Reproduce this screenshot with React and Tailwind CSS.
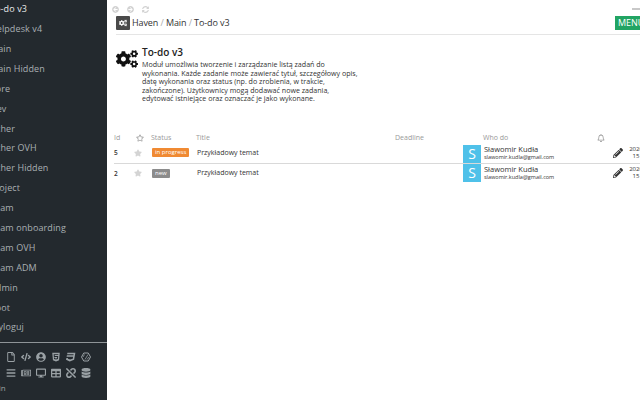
import React from "react";
import { FaCogs, FaStar, FaRegStar, FaRegBell, FaPencilAlt, FaArrowCircleLeft, FaArrowCircleRight, FaSyncAlt, FaRegFile, FaCode, FaUserCircle, FaHtml5, FaCss3, FaBars, FaDesktop, FaTable, FaUnlink, FaDatabase, FaRegNewspaper } from "react-icons/fa";

const menu = ["To-do v3","Helpdesk v4","Main","Main Hidden","Core","Dev","Other","Other OVH","Other Hidden","Project","Team","Team onboarding","Team OVH","Team ADM","Admin","Root","Wyloguj"];

const rows = [
  { id: "5", status: "in progress", cls: "bg-[#f08a33]" },
  { id: "2", status: "new", cls: "bg-[#8c8c8c]" },
];

function Hex({ className }) {
  return (
    <svg viewBox="0 0 20 20" width="1em" height="1em" className={className} fill="none" stroke="currentColor" strokeWidth="2">
      <path d="M5.5 2h9l4.5 8-4.5 8h-9L1 10z" />
      <path d="M4 10l3-5M8 15l6-10M12 15l4-5" strokeWidth="1.5" />
    </svg>
  );
}

const iconsA = [FaRegFile, FaCode, FaUserCircle, FaHtml5, FaCss3, Hex];
const iconsB = [FaBars, FaRegNewspaper, FaDesktop, FaTable, FaUnlink, FaDatabase];

function IconRow({ icons }) {
  return (
    <div className="flex items-center h-[16px] pl-[3px]">
      {icons.map((I, i) => (
        <div key={i} className="w-[15px] flex justify-center"><I className="text-[10px]" /></div>
      ))}
    </div>
  );
}

function Row({ r, first }) {
  return (
    <div className={`flex items-center w-[560px] ${first ? "h-[21px] border-b border-[#d9d9d9]" : "h-[19px]"}`}>
      <div className="w-[20px] text-[6.5px] font-semibold text-[#333]">{r.id}</div>
      <div className="w-[18px]"><FaStar className="text-[#d4d4d4] text-[8px]" /></div>
      <div className="w-[45px] flex">
        <span className={`${r.cls} text-white text-[6px] leading-[9px] px-[3px] rounded-[1px]`}>{r.status}</span>
      </div>
      <div className="w-[266px] text-[7px] text-[#333]">Przykładowy temat</div>
      <div className={`w-[18px] h-[18px] bg-[#4fc1e9] text-white flex items-center justify-center text-[14px] leading-none ${first ? "self-end" : "self-start"}`}>S</div>
      <div className="w-[129px] ml-[3px] flex flex-col">
        <span className="text-[7.5px] leading-[9px] text-[#333]">Sławomir Kudła</span>
        <span className="text-[5.5px] leading-[7px] text-[#333]">slawomir.kudla@gmail.com</span>
      </div>
      <FaPencilAlt className="text-[#333] text-[10px] shrink-0" />
      <div className="ml-[6px] text-[6px] leading-[7px] text-[#333] text-center shrink-0 w-[14px]">2020<br/>15</div>
    </div>
  );
}

export default function App() {
  return (
    <div className="flex w-[640px] h-[400px] overflow-hidden bg-white font-['Open_Sans','Noto_Sans',sans-serif]">
      <aside className="w-[107px] shrink-0 h-full bg-[#23292e] flex flex-col overflow-hidden">
        <div className="flex flex-col -ml-[10px] mt-[-1px]">
          {menu.map((m, i) => (
            <div key={m} className={`h-[19.9px] flex items-center text-[9px] tracking-[0.1px] whitespace-nowrap ${i === 0 ? "text-[#e8eaeb]" : "text-[#a9afb3]"}`}>{m}</div>
          ))}
        </div>
        <div className="mt-[5px] border-t border-[#8e9497] pt-[6px] flex flex-col text-[#9aa1a5]">
          <IconRow icons={iconsA} />
          <IconRow icons={iconsB} />
          <div className="-ml-[13px] text-[8px] mt-[1px]">Main</div>
        </div>
      </aside>
      <main className="flex-1 min-w-0 overflow-hidden">
        <div className="flex items-center gap-[8px] pl-[5px] pt-[4px] h-[14px] text-[#d2d2d2] text-[7px]">
          <FaArrowCircleLeft /><FaArrowCircleRight /><FaSyncAlt />
          <div className="ml-auto w-[8px] h-[2px] bg-[#c8c8c8]" />
        </div>
        <div className="flex items-center h-[21px] ml-[9px] border-b border-[#e5e5e5] pb-[3px]">
          <div className="w-[14px] h-[14px] bg-[#4a4a4a] rounded-[1px] flex items-center justify-center text-white text-[8px]"><FaCogs /></div>
          <div className="ml-[2px] text-[9px] text-[#333] whitespace-nowrap tracking-[-0.1px]">Haven <span className="text-[#aaa]">/</span> Main <span className="text-[#aaa]">/</span> To-do v3</div>
          <div className="ml-auto bg-[#22a463] text-white text-[9px] h-[14px] w-[25px] pl-[3px] overflow-hidden leading-[14px]">MENU</div>
        </div>
        <div className="flex mt-[13px] ml-[9px]">
          <FaCogs className="text-[#111] text-[22px] shrink-0" />
          <div className="ml-[4px] w-[220px] -mt-[2px]">
            <div className="text-[10px] leading-[12px] mb-[2px] font-semibold text-[#222]">To-do v3</div>
            <p className="text-[7.1px] leading-[8.6px] text-[#333]">Moduł umożliwia tworzenie i zarządzanie listą zadań do<br />wykonania. Każde zadanie może zawierać tytuł, szczegółowy opis, datę wykonania oraz status (np. do zrobienia, w trakcie, zakończone). Użytkownicy mogą dodawać nowe zadania, edytować istniejące oraz oznaczać je jako wykonane.</p>
          </div>
        </div>
        <div className="ml-[7px] mt-[30px]">
          <div className="flex items-center h-[10px] text-[7px] text-[#999]">
            <div className="w-[22px]">Id</div>
            <div className="w-[15px]"><FaRegStar className="text-[8px]" /></div>
            <div className="w-[45px]">Status</div>
            <div className="w-[199px]">Title</div>
            <div className="w-[88px]">Deadline</div>
            <div className="w-[114px]">Who do</div>
            <FaRegBell className="text-[8px]" />
          </div>
          {rows.map((r, i) => <Row key={r.id} r={r} first={i === 0} />)}
        </div>
      </main>
    </div>
  );
}
